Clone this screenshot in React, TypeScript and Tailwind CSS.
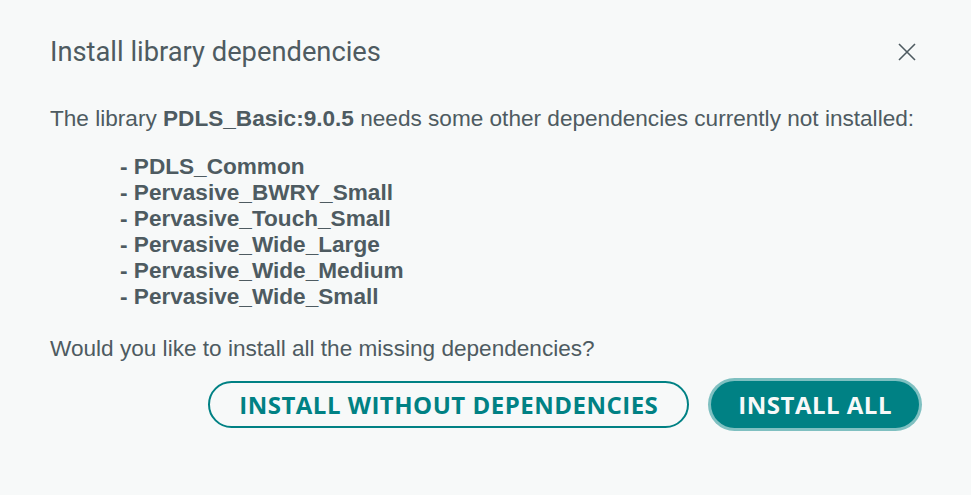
import React from "react";

export default function App() {
  const deps = [
    "PDLS_Common",
    "Pervasive_BWRY_Small",
    "Pervasive_Touch_Small",
    "Pervasive_Wide_Large",
    "Pervasive_Wide_Medium",
    "Pervasive_Wide_Small",
  ];
  return (
    <div className="w-[971px] h-[495px] bg-[#f7f9f9] text-[#4e5b61] overflow-hidden" style={{ fontFamily: "Roboto, 'Liberation Sans', sans-serif" }}>
      <div className="flex items-center justify-between pl-[50px] pr-[54px] pt-[36px]">
        <h1 className="text-[27.3px] leading-[32px] font-normal">Install library dependencies</h1>
        <svg width="20" height="20" viewBox="0 0 20 20" className="text-[#4e5b61]">
          <path d="M2 2 L18 18 M18 2 L2 18" stroke="currentColor" strokeWidth="1.6" fill="none" />
        </svg>
      </div>
      <div className="pl-[50px] pt-[38px] text-[22.6px] leading-[26px]" style={{ fontFamily: "'Liberation Sans', Arial, sans-serif" }}>
        <p>
          The library <b>PDLS_Basic:9.0.5</b> needs some other dependencies currently not installed:
        </p>
        <ul className="pl-[70px] pt-[22px] font-bold">
          {deps.map((d) => (
            <li key={d}>- {d}</li>
          ))}
        </ul>
        <p className="pt-[26px]">Would you like to install all the missing dependencies?</p>
      </div>
      <div className="flex justify-end gap-[22px] pr-[52px] pt-[19px]" style={{ fontFamily: "'Open Sans', sans-serif" }}>
        <button className="h-[47px] px-[29px] rounded-full border-2 border-[#008184] text-[#008184] text-[24px] font-bold tracking-[0.5px]">
          INSTALL WITHOUT DEPENDENCIES
        </button>
        <button className="h-[47px] px-[27px] rounded-full bg-[#008184] text-[#f7f9f9] text-[24px] font-bold tracking-[0.5px] ring-[3px] ring-[#7fc0c1]">
          INSTALL ALL
        </button>
      </div>
    </div>
  );
}
